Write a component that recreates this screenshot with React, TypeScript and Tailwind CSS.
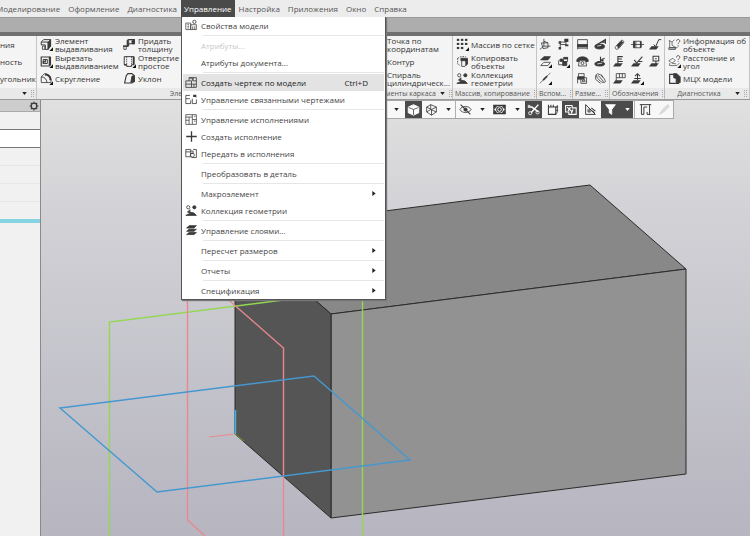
import type { ReactNode } from "react";

const K = "#3a3a3a";

type IconName =
  | "extrude" | "cut" | "fillet" | "thick" | "hole" | "draft"
  | "grid" | "copy" | "collection"
  | "axes" | "nodes" | "planes" | "cube3" | "slash"
  | "dimLin" | "dimA" | "phone" | "dimB" | "dimC" | "dimD"
  | "clip" | "tube" | "rough" | "base" | "check" | "datum" | "flag" | "weld"
  | "info" | "measure" | "mass"
  | "props" | "drawing" | "linked" | "variants" | "plus" | "transfer" | "layers"
  | "solid" | "wire" | "eye" | "camera" | "section" | "bbox" | "zebra" | "angle" | "filter" | "ruler" | "pencil" | "gear";

const base = <path d="M0 14l3-4h9l-3 4z" fill={K} stroke="none" />;

const art: Record<IconName, ReactNode> = {
  extrude: <><path d="M1.500 5l3-3H13v8l-3 3" strokeWidth="1.200" /><path d="M10 5l3-3v8l-3 4z" fill={K} /><path d="M1.500 5H10v9H6.500V8.500h-5z" strokeWidth="1.200" /><path d="M3 10h3v4H3z" strokeWidth="1" /></>,
  cut: <><path d="M1.500 2.500h10v11h-10z" strokeWidth="1.400" /><path d="M12.500 2v11" strokeWidth="2.200" /><path d="M4 5.500h5v5H4z" strokeWidth="1.200" /><path d="M6.500 5.500v3H4v2" strokeWidth="1.600" /></>,
  fillet: <><path d="M1.500 6l4-4c4 0 8 3 8 7v4h-5M1.500 6v7h7" /><path d="M1.500 6c4 0 7 3 7 7" strokeWidth="1.200" /><path d="M6 3c4 0 7 3 7 7" strokeWidth="2.600" /></>,
  thick: <><path d="M5 3l2-1h7v5H8l-2 1" strokeWidth="1.300" /><path d="M5 3h2v7H5zM11 3h3v4h-3z" fill={K} /><path d="M0 9h6v2H0z" fill={K} stroke="none" /><path d="M1 11v3h3v-3" /></>,
  hole: <><path d="M1.500 2h12v10h-3v2h-6v-2h-3z" strokeWidth="1.200" /><path d="M4.500 2v11M10.500 2v11" strokeDasharray="1.500 1" /><path d="M13 2v10M1.500 12h3" strokeWidth="2" /></>,
  draft: <><path d="M2 13.500l2-9 2-2.500h5l3 2.500v7l-3 2z" strokeWidth="1.400" /><path d="M9.500 13l1.500-8 2.500-.5v7z" fill={K} /></>,
  grid: <>{[1, 6, 11].map((y) => [1, 6, 11].map((x) => <rect key={`${x}-${y}`} x={x} y={y} width="3" height="2.600" fill={x + y > 20 ? "none" : K} stroke="none" />))}</>,
  copy: <><path d="M2 4l4-2h6M2 4v7l3 2" strokeDasharray="2 1.200" /><path d="M7 6h7v5l-3 3H7z" /><path d="M6 4h8v3H6zM12 6h2v5l-2 2z" fill={K} /></>,
  collection: <><circle cx="4" cy="4" r="2" /><circle cx="11.500" cy="4" r="2" fill={K} /><path d="M6 7l-3 3 4 1-6 3h13l-3-3-5-1z" fill={K} /></>,
  axes: <path d="M6 1v9l-5 4M6 10h8M3 6h8v6l-6 1zM6 4l5 2" />,
  nodes: <><path d="M4 12V5h7M4 8h8M11 5v4" /><path d="M9 1h5v4H9zM10 8h4v2h-4zM2 11h3v3H2zM2 4h3v3H2z" fill={K} stroke="none" /></>,
  planes: <><path d="M2 6l4-4h8l-3 4z" fill={K} /><path d="M2 13l4-4h8l-3 4z" /></>,
  cube3: <><path d="M2 7l3-2 3 2v5H2zM8 3h5v5H8z" /><path d="M7 8h5v5H7zM9 3h4v2H9zM4 5h3v3H4z" fill={K} /></>,
  slash: <><path d="M1 14L14 1" strokeWidth=".8" /><path d="M5 10l5-5" strokeWidth="2" /></>,
  dimLin: <><path d="M2 2h12v8H2zM2 10v4M14 10v4M2 12.500h12" /><path d="M2 8h12v3H2z" fill={K} /></>,
  dimA: <><ellipse cx="7" cy="10.500" rx="6" ry="3" fill={K} /><path d="M4 8l10-6v5M8 5h6" strokeWidth="1.500" /><path d="M4 10l5-1" stroke="#eee" /></>,
  phone: <><path d="M1 6c2-5 12-5 14 0v2h-3V6H4v2H1z" fill={K} /><path d="M4 7h8l1 6.500H3z" /><circle cx="8" cy="10" r="1.800" /></>,
  dimB: <><ellipse cx="7" cy="11" rx="6" ry="2.600" fill={K} /><path d="M4 9l9-5M8 2v7M11 4v4" strokeWidth="1.400" /><path d="M4 11l6-1" stroke="#eee" /></>,
  dimC: <><path d="M3 2h7v4H3zM2 6v8M6 7h7v7H6zM2 9h9M8 10h3v2H8z" /><path d="M2 6h8v2H2z" fill={K} /></>,
  dimD: <><path d="M3 3c3-3 11 5 11 9-3 4-12-5-11-9z" /><path d="M2 4v5l6 5M5 4l7 8M9 3l2 4" /></>,
  clip: <><path d="M3 11l7-8c2-1 4 1 3 3l-6 7c-3 2-5 0-4-2z" /><path d="M5 10l6-6M6 12l6-7" strokeWidth="1.800" /></>,
  tube: <><path d="M3 4h9v8H3zM0 8h16M6 4v8" /><path d="M3 4h2v8H3zM11 4h2v8h-2z" fill={K} stroke="none" /></>,
  rough: <>{base}<path d="M6 8l2 3 4-9h3" strokeWidth="1.200" /></>,
  base: <>{base}<path d="M6 11V2h6M6 5h5M6 8h6" strokeWidth="1.300" /></>,
  check: <>{base}<path d="M4 6l3 4 7-8M9 8h5" strokeWidth="1.400" /></>,
  datum: <>{base}<path d="M5 1.500h7v6H5zM8.500 7v4M7.500 4.500h2" strokeWidth="1.300" /></>,
  flag: <>{base}<path d="M4 11V2h11v5H4M8 2v5M11.500 2v5" /></>,
  weld: <>{base}<path d="M8 10V2M5 5l3-3 3 3M4 8h8" strokeWidth="1.300" /></>,
  info: <><path d="M1 3l4 2 3-3M2 3v9h9l2-2M5 5v4l5 3" strokeWidth=".8" /><path d="M10.500 4c0-3 4-3 4 0 0 1.500-2 1.500-2 3M12.500 8.500v1" /><path d="M1 12h8v2H1z" /></>,
  measure: <><path d="M1 7l5-3 3 3-4 3zM2 13h9l3-3M2 10v3M5 10l5 1" strokeWidth=".8" /><path d="M10.500 3c0-3 4-3 4 0 0 1.500-2 1.500-2 3M12.500 7.500v1" /></>,
  mass: <><path d="M2 3h7l4 4v7H2z" strokeWidth="1.400" /><path d="M7 2h4l4 4v7h-5V8l-3-1z" fill={K} /></>,
  props: <><path d="M1 5h6v8H1zM7 7h7v6H7zM3 7h2M3 9h2M3 11h2M9.500 9v4M12 9v4" strokeWidth=".9" /><circle cx="11.500" cy="3.500" r="2" /></>,
  drawing: <><path d="M1 6h4V2h9v12H1zM1 10h7M5 6h3v8M8 10h6M10 2v4h4" /><path d="M5 2.500h4V6M11 10v4" /></>,
  linked: <><path d="M6 3H1v4h5M1 7v6h6V9M9 7v6h5V8" /><path d="M10 2h4v4l-1-1h-3z" fill={K} stroke="none" /></>,
  variants: <><path d="M1 2h13v12H1zM1 5h8M5 5v9M9 2v12M9 8h5M1 9h4M11 4h2M11 10h2" strokeWidth=".9" /></>,
  plus: <path d="M8 1.500v13M1.500 8h13" strokeWidth="1.600" />,
  transfer: <><path d="M1 3h6v9H1zM1 6h6M7 5h3v3H7M10 3h4v10H8" /><circle cx="9" cy="10" r="2.500" /></>,
  layers: <><path d="M2 5l3-3h9l-3 3zM2 9l3-2.500h9L11 9zM2 13l3-2.500h9L11 13z" fill={K} /></>,
  solid: <><path d="M1.500 5L8 2l6.500 3v7L8 15l-6.500-3z" fill="#fff" stroke="#fff" /><path d="M2 5.500L8 8l6-2.500M8 8v6.500" stroke="#444" /></>,
  wire: <path d="M2 5l5-3 7 3v6l-6 4-6-4zM2 5l6 3 6-3M8 8v7M7 2v6l-5 3M7 8l7 3" />,
  eye: <><path d="M1 8c3-5 11-5 14 0-3 5-11 5-14 0z" /><circle cx="8" cy="8" r="2" fill={K} /><path d="M2 2l12 12" strokeWidth="1.400" /></>,
  camera: <><path d="M1 3h14v10H1z" strokeWidth="1.400" /><path d="M1 3h4L2 7zM15 13h-4l3-4zM15 3h-4l3 4zM1 13h4L2 9z" fill={K} /><circle cx="8" cy="8" r="3.400" strokeWidth="1.400" /><circle cx="8" cy="8" r="1.200" fill={K} /></>,
  section: <><path d="M1 5h5l8 6M14 2L5 12" stroke="#fff" strokeWidth="1.800" /><circle cx="4" cy="12.500" r="2" stroke="#fff" /><circle cx="13" cy="11.500" r="2" stroke="#fff" /><path d="M1 3h3" stroke="#fff" /></>,
  bbox: <><path d="M3 5h9v9H3zM3 5V2M6 5V2M9 5V2M12 5h3M12 9h3" strokeWidth="1.300" /><path d="M12 5l2-2v8l-2 3" /></>,
  zebra: <><path d="M2 3h8v3h5v8H6v-3H2z" stroke="#fff" strokeWidth="1.300" /><path d="M4 5l6 6M8 5l-3 5M11 8l-2 5" stroke="#fff" strokeWidth="1.500" /></>,
  angle: <><path d="M2 2v12h12L2 2zM5 8v3h3z" strokeWidth="1.200" /><path d="M6 7l7 5M9 6l5 4" strokeWidth="1.300" /></>,
  filter: <path d="M2 2h12L9.500 8v6L6.500 12V8z" fill="#fff" stroke="#fff" />,
  ruler: <><path d="M1 2h14M3 2v12h3V5h4M13 2v12M10 11v3h4" strokeWidth="1.200" /></>,
  pencil: <path d="M2 14l3-5 7-7 2 2-7 7z" fill="#ddd" stroke="#ccc" />,
  gear: <><circle cx="8" cy="8" r="4.500" strokeWidth="2" /><path d="M8 1v3M8 12v3M1 8h3M12 8h3M3 3l2 2M11 11l2 2M13 3l-2 2M5 11l-2 2" strokeWidth="1.800" /></>,
};

function Icon({ name, tick = false, small = false }: { name: IconName; tick?: boolean; small?: boolean }) {
  return (
    <svg viewBox="0 0 16 16" fill="none" stroke={K} strokeWidth="1" aria-hidden="true" className={small ? "size-[10px] shrink-0" : "size-[13px] shrink-0"}>
      {art[name]}
      {tick && <path d="M16 11.500V16h-4.500z" fill="#111" stroke="none" />}
    </svg>
  );
}

function Caret({ light = false }: { light?: boolean }) {
  return (
    <svg viewBox="0 0 6 4" className="h-[3px] w-[5px] shrink-0" aria-hidden="true">
      <path d="M0 0h6L3 4z" fill={light ? "#fff" : "#222"} />
    </svg>
  );
}

function Tool({ icon, tick, children }: { icon?: IconName; tick?: boolean; children: ReactNode }) {
  return (
    <button type="button" className="flex h-[17px] items-center gap-0.5 text-left text-[8px] leading-[8px] whitespace-nowrap">
      {icon && <Icon name={icon} tick={tick} />}
      <span>{children}</span>
    </button>
  );
}

function Group({ label, caret, className, body, children }: { label?: string; caret?: boolean; className: string; body: string; children: ReactNode }) {
  return (
    <section className={`flex flex-col border-r border-[#c4c4c4] ${className}`}>
      <div className={`h-[52px] bg-[#f4f4f4] ${body}`}>{children}</div>
      <div className="flex h-[11px] items-center gap-1 bg-[#e9e9e9] px-0.5 text-[7px] leading-[10px] text-[#555]">
        <span className="flex-1 text-center whitespace-nowrap">{label}</span>
        {caret && <Caret />}
        <span className="h-[7px] w-[3px] shrink-0 border-x border-dotted border-[#aaa]" />
      </div>
    </section>
  );
}

function IconGrid({ items }: { items: [IconName, boolean?][] }) {
  return (
    <>
      {items.map(([name, tick]) => (
        <button key={name} type="button" aria-label={name} className="flex h-[17px] items-center justify-center">
          <Icon name={name} tick={tick} />
        </button>
      ))}
    </>
  );
}

type Entry = { label: string; icon?: IconName; sub?: boolean; off?: boolean; active?: boolean; keys?: string };

const sections: Entry[][] = [
  [{ label: "Свойства модели", icon: "props" }],
  [{ label: "Атрибуты...", off: true }, { label: "Атрибуты документа..." }],
  [{ label: "Создать чертеж по модели", icon: "drawing", active: true, keys: "Ctrl+D" }, { label: "Управление связанными чертежами", icon: "linked" }],
  [{ label: "Управление исполнениями", icon: "variants" }, { label: "Создать исполнение", icon: "plus" }, { label: "Передать в исполнения", icon: "transfer" }],
  [{ label: "Преобразовать в деталь" }],
  [{ label: "Макроэлемент", sub: true }, { label: "Коллекция геометрии", icon: "collection" }],
  [{ label: "Управление слоями...", icon: "layers" }],
  [{ label: "Пересчет размеров", sub: true }],
  [{ label: "Отчеты", sub: true }],
  [{ label: "Спецификация", sub: true }],
];

function DropMenu() {
  return (
    <div role="menu" className="absolute top-full left-0 z-20 w-[205px] border border-t-0 border-[#555] bg-white px-px shadow-[1px_1px_1px_#777]">
      {sections.map((section, i) => (
        <div key={i}>
          {i > 0 && <div role="separator" className="my-px ml-5 h-px bg-[#e6e6e6]" />}
          {section.map((e) => (
            <button
              key={e.label}
              type="button"
              role="menuitem"
              disabled={e.off}
              className={`flex h-[17px] w-full items-center pr-2 pl-0.5 text-left text-[8px] leading-[12px] whitespace-nowrap ${e.active ? "bg-[#e3e3e3] text-[#222]" : e.off ? "text-[#c8c8c8]" : "text-[#444]"}`}
            >
              <span className="w-4 shrink-0">{e.icon && <Icon name={e.icon} />}</span>
              <span className="flex-1">{e.label}</span>
              {e.keys && <span className="mr-2">{e.keys}</span>}
              {e.sub && (
                <svg viewBox="0 0 4 6" className="h-[5px] w-1" aria-hidden="true">
                  <path d="M0 0v6l4-3z" fill="#222" />
                </svg>
              )}
            </button>
          ))}
        </div>
      ))}
    </div>
  );
}

function MenuBar() {
  const before = ["Моделирование", "Оформление", "Диагностика"];
  const after = ["Настройка", "Приложения", "Окно", "Справка"];
  const item = "px-1 text-[8px] leading-[17px] text-[#555]";
  return (
    <nav className="flex h-[17px] shrink-0 bg-[#ececec]">
      <div className="-ml-2 flex">
        {before.map((t) => <button key={t} type="button" className={item}>{t}</button>)}
      </div>
      <div className="relative flex">
        <button type="button" aria-expanded="true" className="bg-[#4a4a4a] px-[3px] text-[8px] leading-[17px] text-white">Управление</button>
        <DropMenu />
      </div>
      {after.map((t) => <button key={t} type="button" className={item}>{t}</button>)}
    </nav>
  );
}

function Ribbon() {
  return (
    <div className="flex shrink-0 border-b border-[#999] bg-[#f4f4f4] text-[#333]">
      <Group className="w-[37px]" caret body="flex flex-col">
        <Tool>ния</Tool>
        <Tool>ность</Tool>
        <Tool>угольник</Tool>
      </Group>
      <Group label="Элементы тела" className="flex-1" caret body="flex gap-3 pl-[3px]">
        <div className="w-[71px]">
          <Tool icon="extrude" tick>Элемент<br />выдавливания</Tool>
          <Tool icon="cut" tick>Вырезать<br />выдавливанием</Tool>
          <Tool icon="fillet" tick>Скругление</Tool>
        </div>
        <div>
          <Tool icon="thick">Придать<br />толщину</Tool>
          <Tool icon="hole" tick>Отверстие<br />простое</Tool>
          <Tool icon="draft">Уклон</Tool>
        </div>
      </Group>
      <Group label="Элементы каркаса" className="w-[82px]" caret body="pl-px">
        <Tool icon="axes">Точка по<br />координатам</Tool>
        <Tool icon="clip">Контур</Tool>
        <Tool icon="slash">Спираль<br />цилиндрическ...</Tool>
      </Group>
      <Group label="Массив, копирование" className="w-[84px]" body="pl-[3px]">
        <Tool icon="grid" tick>Массив по сетке</Tool>
        <Tool icon="copy">Копировать<br />объекты</Tool>
        <Tool icon="collection">Коллекция<br />геометрии</Tool>
      </Group>
      <Group label="Вспом..." className="w-[36px]" body="grid grid-cols-2 content-start">
        <IconGrid items={[["axes"], ["nodes"], ["planes", true], ["cube3", true], ["slash", true]]} />
      </Group>
      <Group label="Разме..." className="w-[37px]" body="grid grid-cols-2 content-start">
        <IconGrid items={[["dimLin"], ["dimA"], ["phone"], ["dimB"], ["dimC"], ["dimD"]]} />
      </Group>
      <Group label="Обозначения" className="w-[55px]" body="grid grid-cols-3 content-start">
        <IconGrid items={[["clip"], ["tube"], ["rough"], ["base"], ["check"], ["datum"], ["flag"], ["weld", true]]} />
      </Group>
      <Group label="Диагностика" className="w-[85px]" caret body="pl-[3px]">
        <Tool icon="info">Информация об<br />объекте</Tool>
        <Tool icon="measure" tick>Расстояние и<br />угол</Tool>
        <Tool icon="mass">МЦХ модели</Tool>
      </Group>
    </div>
  );
}

function ViewButton({ icon, dark, caret, className }: { icon?: IconName; dark?: boolean; caret?: boolean; className: string }) {
  return (
    <button type="button" aria-label={icon ?? "more"} className={`flex h-full items-center justify-center gap-2 ${dark ? "bg-[#4b4b4b]" : ""} ${className}`}>
      {icon && <Icon name={icon} />}
      {caret && <Caret light={dark} />}
    </button>
  );
}

function ViewToolbar() {
  return (
    <div className="flex h-[19px] border border-[#a8a8a8] bg-[#f8f8f8]">
      <ViewButton caret className="w-[18px]" />
      <ViewButton icon="solid" dark className="w-[17px]" />
      <ViewButton icon="wire" className="w-[19px]" />
      <ViewButton caret className="w-[15px] border-r border-[#b0b0b0]" />
      <ViewButton icon="eye" className="w-[19px]" />
      <ViewButton caret className="w-[14px]" />
      <ViewButton icon="camera" className="w-[20px]" />
      <ViewButton caret className="w-[16px]" />
      <ViewButton icon="section" dark className="w-[17px]" />
      <ViewButton icon="bbox" className="w-[20px]" />
      <ViewButton icon="zebra" dark className="w-[17px]" />
      <ViewButton icon="angle" className="w-[22px]" />
      <ViewButton icon="filter" dark caret className="w-[32px]" />
      <ViewButton icon="ruler" className="ml-px w-[21px] border-l border-[#b0b0b0]" />
      <ViewButton icon="pencil" className="w-[18px]" />
    </div>
  );
}

function Scene() {
  return (
    <svg className="absolute inset-0 size-full" role="img" aria-label="3D" fill="none" strokeWidth="1">
      <g transform="translate(-41 -100)">
        <g stroke="#2b2b2b" strokeLinejoin="round">
          <path d="M235 230L590 185L686 269L331 314z" fill="#888" />
          <path d="M331 314L686 269V474L331 518z" fill="#929292" />
          <path d="M235 230L331 314V518L235 434z" fill="#555" />
        </g>
        <g strokeWidth="1.400">
          <path d="M109.500 2000V322L362.500 290V2000" stroke="#92d850" />
          <path d="M205 536L187.500 520V264L283.500 348V2000" stroke="#e8898f" />
          <path d="M60 408L314 376L410 460L157 492z" stroke="#4598cf" />
          <path d="M235.500 410v24" stroke="#35b5f5" />
        </g>
        <path d="M209 437l26-3" stroke="#f08a8a" />
        <path d="M235 434l9 7" stroke="#6b9b20" />
      </g>
    </svg>
  );
}

function SidePanel() {
  return (
    <aside className="w-[41px] shrink-0 border-r border-[#8a8a8a] bg-[#f1f1f1]">
      <div className="flex h-3 items-center justify-end border-b border-[#aaa] bg-[#cdcdcd] pr-px">
        <button type="button" aria-label="gear"><Icon name="gear" small /></button>
      </div>
      <div className="h-[17px]" />
      <input aria-label="filter" className="block h-[19px] w-full border-y border-[#777] bg-white" />
      <div className="h-[18px] border-b border-[#e6e6e6]" />
      <div className="h-[18px] border-b border-[#e6e6e6]" />
      <div className="h-[18px] border-b border-[#e6e6e6]" />
      <div className="mt-[17px] h-1 bg-[#86d3e2]" />
    </aside>
  );
}

export default function App() {
  return (
    <div className="flex h-screen flex-col overflow-hidden bg-[#ececec] font-['Open_Sans','Noto_Sans',sans-serif]">
      <MenuBar />
      <div className="h-[15px] shrink-0 border-t border-[#999] bg-[#adadad]" />
      <div className="h-1 shrink-0 bg-[#707070]" />
      <Ribbon />
      <div className="flex min-h-0 flex-1">
        <SidePanel />
        <main className="relative min-w-0 flex-1 bg-linear-to-b from-[#e0e0e0] via-[#d0d0d5] via-30% to-[#b6b5c0]">
          <Scene />
          <div className="relative flex justify-end pr-[76px]">
            <ViewToolbar />
          </div>
        </main>
      </div>
    </div>
  );
}
